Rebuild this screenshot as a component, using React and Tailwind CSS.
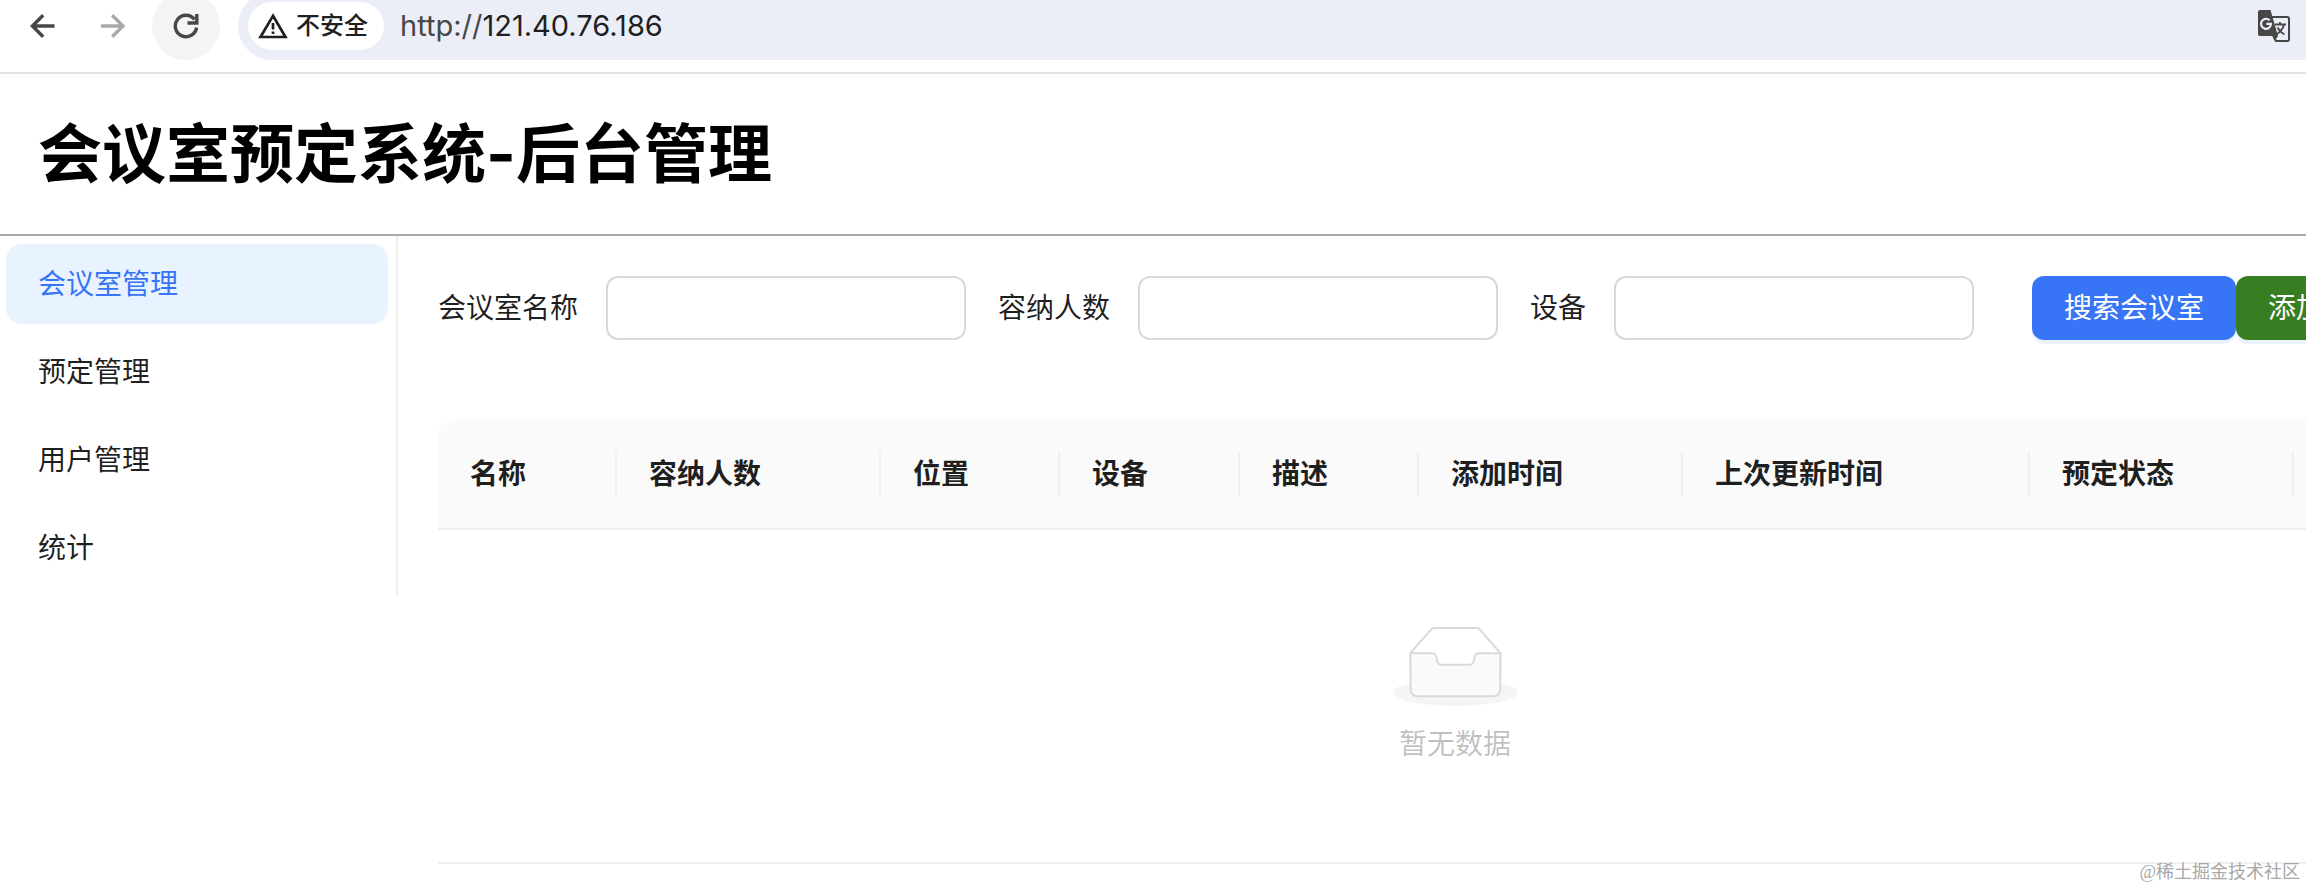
import { useState } from 'react';

const menuItems = [
  { key: 'room', label: '会议室管理' },
  { key: 'booking', label: '预定管理' },
  { key: 'user', label: '用户管理' },
  { key: 'stats', label: '统计' },
];

const fields = [
  { name: 'name', label: '会议室名称' },
  { name: 'capacity', label: '容纳人数' },
  { name: 'equipment', label: '设备' },
];

const columns = [
  { title: '名称', width: 'w-[179px]' },
  { title: '容纳人数', width: 'w-[264px]' },
  { title: '位置', width: 'w-[179px]' },
  { title: '设备', width: 'w-[180px]' },
  { title: '描述', width: 'w-[179px]' },
  { title: '添加时间', width: 'w-[264px]' },
  { title: '上次更新时间', width: 'w-[347px]' },
  { title: '预定状态', width: 'w-[264px]' },
  { title: '操作', width: 'w-[178px]' },
];

function TranslateIcon() {
  return (
    <svg viewBox="0 0 32 32" className="h-8 w-8" fill="none">
      <path d="M14 7h15.500a1.500 1.500 0 0 1 1.500 1.500v21a1.500 1.500 0 0 1-1.500 1.500H18l-3-6" stroke="#474747" strokeWidth="2" />
      <path d="M2 0h10.500l7.500 26-3.500 5-2-5H2a2 2 0 0 1-2-2V2a2 2 0 0 1 2-2z" fill="#474747" />
      <path d="M11.600 10.300A5 5 0 1 0 13 13.800H8.300" stroke="#ebeef7" strokeWidth="2.200" />
      <path d="M17 14.500h11M22 12v2.500M26 14.500c-1 4.500-4 7.500-7.500 10M19.500 17.500c1.500 3 4 5.500 7 7" stroke="#474747" strokeWidth="1.800" />
    </svg>
  );
}

function BrowserBar() {
  return (
    <div className="flex h-[74px] items-start border-b-2 border-[#e1e1e1] bg-white">
      <button type="button" aria-label="Back" className="ml-[30px] mt-[14px]">
        <svg viewBox="0 0 24 24" className="h-6 w-6 overflow-visible" fill="none" stroke="#474747" strokeWidth="3.400">
          <path d="M24.500 12H3M13.200 1.200L2.400 12l10.800 10.800" />
        </svg>
      </button>
      <button type="button" aria-label="Forward" className="ml-[47px] mt-[14px]">
        <svg viewBox="0 0 24 24" className="h-6 w-6 overflow-visible" fill="none" stroke="#a9a9a9" strokeWidth="3.400">
          <path d="M0 12h21.500M11.200 1.200L22 12 11.200 22.800" />
        </svg>
      </button>
      <button type="button" aria-label="Reload" className="-mt-2 ml-[27px] flex h-[68px] w-[68px] items-center justify-center rounded-full bg-[#f4f4f4]">
        <svg viewBox="0 0 26 26" className="h-[26px] w-[26px]" fill="none" stroke="#474747" strokeWidth="3.400">
          <path d="M23.600 14.500A10.700 10.700 0 1 1 21.500 6.500" />
          <path d="M23.800 1v9H14.500" />
        </svg>
      </button>
      <div className="-mt-2 ml-[18px] flex h-[68px] flex-1 items-center rounded-l-full bg-[#ebeef7] pl-[10px] pr-4">
        <button type="button" className="flex h-12 w-[136px] items-center gap-2 rounded-full bg-white pl-2.5 text-2xl font-medium text-[#1f1f1f]">
          <svg viewBox="0 0 30 26" className="h-[26px] w-[30px] shrink-0" fill="none" stroke="#1f1f1f" strokeWidth="2.700">
            <path d="M15 2.800L27.500 24h-25z" />
            <path d="M15 10v6.500M15 18.500v2.500" />
          </svg>
          <span className="whitespace-nowrap">不安全</span>
        </button>
        <span className="ml-4 flex-1 font-[Inter] text-[29px] text-[#1f1f1f]">
          <span className="text-[#474747]">http://</span>121.40.76.186
        </span>
        <button type="button" aria-label="Translate">
          <TranslateIcon />
        </button>
      </div>
    </div>
  );
}

function EmptyState() {
  return (
    <div className="my-16 flex flex-col items-center gap-4">
      <svg viewBox="0 0 64 41" className="h-20" fill="none">
        <g transform="translate(0 1)">
          <ellipse cx="32" cy="33" rx="32" ry="7" fill="#f5f5f5" />
          <g stroke="#d9d9d9">
            <path d="M55 12.760L44.854 1.258C44.367.474 43.656 0 42.907 0H21.093c-.749 0-1.460.474-1.947 1.257L9 12.761V22h46v-9.240z" />
            <path
              d="M41.613 15.931c0-1.605.994-2.930 2.227-2.931H55v18.137C55 33.260 53.680 35 52.050 35h-40.100C10.320 35 9 33.259 9 31.137V13h11.160c1.233 0 2.227 1.323 2.227 2.928v.022c0 1.605 1.005 2.901 2.237 2.901h14.752c1.232 0 2.237-1.308 2.237-2.913v-.007z"
              fill="#fafafa"
            />
          </g>
        </g>
      </svg>
      <p className="leading-[44px] text-black/25">暂无数据</p>
    </div>
  );
}

export default function App() {
  const [active, setActive] = useState('room');

  return (
    <div className="relative min-h-screen overflow-hidden bg-white font-['Inter','Noto_Sans_CJK_SC',sans-serif] text-[28px] leading-[44px] text-black/88">
      <BrowserBar />

      {/* Header */}
      <header className="flex h-[162px] items-center border-b-2 border-[#aaa] px-[38px]">
        <h1 className="text-[64px] font-bold leading-[96px] text-black">会议室预定系统-后台管理</h1>
      </header>

      <div className="flex items-start">
        {/* Sidebar */}
        <nav className="w-[398px] shrink-0 border-r-2 border-[#f0f0f0] py-2 pl-1.5 pr-2">
          <ul className="space-y-2">
            {menuItems.map((item) => (
              <li key={item.key}>
                <button
                  type="button"
                  onClick={() => setActive(item.key)}
                  className={`h-20 w-full rounded-2xl px-8 text-left ${active === item.key ? 'bg-[#e8f3ff] text-[#3875f6]' : ''}`}
                >
                  {item.label}
                </button>
              </li>
            ))}
          </ul>
        </nav>

        <main className="min-w-0 flex-1 overflow-hidden pl-10 pt-10">
          {/* Search form */}
          <form className="flex items-center gap-8" onSubmit={(e) => e.preventDefault()}>
            {fields.map((f) => (
              <div key={f.name} className="flex shrink-0 items-center gap-7">
                <label htmlFor={f.name}>{f.label}</label>
                <input id={f.name} name={f.name} type="text" className="h-16 w-[360px] rounded-xl border-2 border-[#d9d9d9] px-5 outline-none" />
              </div>
            ))}
            <div className="flex shrink-0 pl-[26px] text-white">
              <button type="submit" className="h-16 rounded-xl bg-[#3875f6] px-8 shadow-[0_4px_0_#ebf3ff]">搜索会议室</button>
              <button type="button" className="h-16 rounded-xl bg-[#377e22] px-8 shadow-[0_4px_0_#ebf3ff]">添加会议室</button>
            </div>
          </form>

          {/* Room list */}
          <table className="mt-20 w-[2034px] table-fixed border-separate border-spacing-0">
            <thead>
              <tr>
                {columns.map((col) => (
                  <th key={col.title} className={`border-b-2 border-[#f0f0f0] bg-[#fafafa] py-8 text-left font-bold first:rounded-tl-2xl ${col.width}`}>
                    <div className="border-r-2 border-[#f0f0f0] pl-8">{col.title}</div>
                  </th>
                ))}
              </tr>
            </thead>
            <tbody>
              <tr>
                <td colSpan={columns.length} className="border-b-2 border-[#f0f0f0] p-8">
                  <EmptyState />
                </td>
              </tr>
            </tbody>
          </table>
        </main>
      </div>

      <span className="absolute bottom-1.5 right-1.5 font-['Liberation_Serif','Noto_Sans_CJK_SC',serif] text-lg leading-5 text-[#a8a8a8]">
        @稀土掘金技术社区
      </span>
    </div>
  );
}
